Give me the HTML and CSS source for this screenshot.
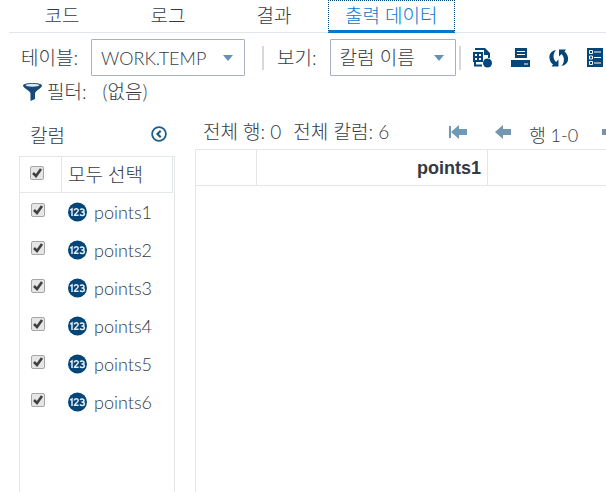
FILE: index.html
```html
<!DOCTYPE html>
<html lang="ko">

<head>
    <meta charset="utf-8">
    <meta name="viewport" content="width=device-width, initial-scale=1.0">
    <title>출력 데이터</title>
    <link rel="stylesheet" href="styles.css">
</head>

<body>
    <svg width="0" height="0" class="symbols" aria-hidden="true">
        <symbol id="numeric" viewBox="0 0 20 20">
            <circle cx="9.5" cy="10" r="9.5" fill="#04467a" />
            <g fill="none" stroke="#e6eef5" stroke-width="1.5">
                <path d="M2.2 8.2L4 7v7" />
                <path d="M6.4 8.5C6.4 6.2 10.3 6.2 10.2 8.6 10.2 10.2 6.8 11.7 6.5 13.300H10.6" />
                <path d="M12.2 7.9C13 6.4 16 6.6 16 8.5 16 9.8 15 10.1 13.5 10.1 15.2 10.1 16.4 10.6 16.4 11.9 16.3 14 13 14 12 12.5" />
            </g>
        </symbol>
    </svg>

    <nav class="tabs">
        <button class="tab">코드</button>
        <button class="tab">로그</button>
        <button class="tab">결과</button>
        <button class="tab active">출력 데이터</button>
    </nav>

    <div class="toolbar">
        <label for="table">테이블:</label>
        <select id="table" class="select-table">
            <option>WORK.TEMP</option>
        </select>
        <span class="separator"></span>
        <label for="view">보기:</label>
        <select id="view" class="select-view">
            <option>칼럼 이름</option>
        </select>
        <span class="separator tight"></span>
        <div class="tools">
            <button class="icon-button" aria-label="내보내기">
                <svg width="20" height="20" viewBox="0 0 20 20">
                    <path d="M2 0h10l5 5v5h-2V7h-4V2H2zM1 14h2v2.500h6v2H1z" fill="#04467a" />
                    <path d="M0 4h10v10H0z" fill="#04467a" />
                    <path d="M2 6h2v2H2zM6 6h2v2H6zM2 10h2v2H2zM6 10h2v2H6z" fill="#fff" />
                    <circle cx="14.500" cy="15" r="4.500" fill="#04467a" />
                </svg>
            </button>
            <button class="icon-button" aria-label="인쇄">
                <svg width="20" height="20" viewBox="0 0 20 20">
                    <path d="M4 0h12v10H4zM0 12h19v7H0z" fill="#04467a" />
                    <path d="M6 3.500h8M6 6.500h8M13 16h4" stroke="#fff" stroke-width="1.200" />
                </svg>
            </button>
            <button class="icon-button" aria-label="새로 고침">
                <svg width="20" height="20" viewBox="0 0 20 20">
                    <path d="M7 2C1.500 3 0 7 .5 10.500c.4 2.500 1.500 4.500 3.500 6L2.500 18.500H9.500v-7l-2.500 2.500C4 11 3.500 6 7 2z" fill="#04467a" />
                    <path d="M12.500 18c5.500-1 7-5 6.500-8.500-.4-2.500-1.500-4.500-3.500-6L17 1.500H10v7L12.500 6C15.500 9 16 14 12.500 18z" fill="#04467a" />
                </svg>
            </button>
            <button class="icon-button" aria-label="속성">
                <svg width="20" height="20" viewBox="0 0 20 20">
                    <path d="M0 0h16v19H0z" fill="#04467a" />
                    <path d="M7 4h7M7 9.500h7M7 15h7" stroke="#fff" stroke-width="1.200" />
                    <path d="M2.500 2.500h3v3h-3zM2.500 8h3v3h-3zM2.500 13.500h3v3h-3z" fill="none" stroke="#fff" />
                </svg>
            </button>
        </div>
    </div>

    <div class="filter">
        <svg width="20" height="20" viewBox="0 0 20 20">
            <path d="M0 3.500C0 0 19 0 19 3.500 19 6 12 9 12 11.500V17L7.500 19V11.500C7.500 9 0 6 0 3.500z" fill="#17497a" />
            <ellipse cx="9.5" cy="3.200" rx="7" ry="1.500" fill="#dfe8ef" />
        </svg>
        <span>필터:</span>
        <span class="filter-value">(없음)</span>
    </div>

    <main class="content">
        <section class="columns">
            <header class="columns-header">
                <span>칼럼</span>
                <button class="icon-button" aria-label="접기">
                    <svg width="16" height="16" viewBox="0 0 16 16" fill="none" stroke="#1c5f8d">
                        <circle cx="8" cy="8" r="6.900" stroke-width="1.800" />
                        <path d="M9.700 4.800L6.500 8l3.200 3.200" stroke-width="2.200" />
                    </svg>
                </button>
            </header>
            <div class="columns-body">
                <table class="column-list">
                    <thead>
                        <tr>
                            <th class="check"><input type="checkbox" id="all" checked></th>
                            <th><label for="all">모두 선택</label></th>
                        </tr>
                    </thead>
                    <tbody>
                        <tr>
                            <td class="check"><input type="checkbox" id="c1" checked></td>
                            <td><label for="c1"><svg width="20" height="20"><use href="#numeric" /></svg>points1</label></td>
                        </tr>
                        <tr>
                            <td class="check"><input type="checkbox" id="c2" checked></td>
                            <td><label for="c2"><svg width="20" height="20"><use href="#numeric" /></svg>points2</label></td>
                        </tr>
                        <tr>
                            <td class="check"><input type="checkbox" id="c3" checked></td>
                            <td><label for="c3"><svg width="20" height="20"><use href="#numeric" /></svg>points3</label></td>
                        </tr>
                        <tr>
                            <td class="check"><input type="checkbox" id="c4" checked></td>
                            <td><label for="c4"><svg width="20" height="20"><use href="#numeric" /></svg>points4</label></td>
                        </tr>
                        <tr>
                            <td class="check"><input type="checkbox" id="c5" checked></td>
                            <td><label for="c5"><svg width="20" height="20"><use href="#numeric" /></svg>points5</label></td>
                        </tr>
                        <tr>
                            <td class="check"><input type="checkbox" id="c6" checked></td>
                            <td><label for="c6"><svg width="20" height="20"><use href="#numeric" /></svg>points6</label></td>
                        </tr>
                    </tbody>
                </table>
            </div>
        </section>

        <section class="data">
            <div class="data-header">
                <span class="total">전체 행: 0</span>
                <span class="total">전체 칼럼: 6</span>
                <div class="pager">
                    <button class="icon-button" aria-label="처음">
                        <svg width="18" height="16" viewBox="0 0 18 16" fill="#6f9ab6">
                            <path d="M0 2h2v12H0zM2 8l8-7v4h8v6h-8v4z" />
                        </svg>
                    </button>
                    <button class="icon-button" aria-label="이전">
                        <svg width="16" height="16" viewBox="0 0 16 16" fill="#7396b1">
                            <path d="M0 8l8-7v4h8v6H8v4z" />
                        </svg>
                    </button>
                    <span class="range">행 1-0</span>
                    <button class="icon-button" aria-label="다음">
                        <svg width="16" height="16" viewBox="0 0 16 16" fill="#7396b1">
                            <path d="M16 8L8 1v4H0v6h8v4z" />
                        </svg>
                    </button>
                </div>
            </div>
            <div class="data-body">
                <table class="grid">
                    <thead>
                        <tr>
                            <th class="row-number"></th>
                            <th class="variable">points1</th>
                            <th></th>
                        </tr>
                    </thead>
                </table>
            </div>
        </section>
    </main>
</body>

</html>
```

FILE: styles.css
```css
* {
    box-sizing: border-box;
}

body {
    margin: 0;
    height: 100vh;
    display: flex;
    flex-direction: column;
    overflow: hidden;
    background: #fff;
    color: #333a45;
    font-family: Lato, "Noto Sans CJK KR", sans-serif;
    font-size: 19px;
    font-weight: 300;
    line-height: 24px;
    white-space: nowrap;
}

button,
select {
    font: inherit;
    color: inherit;
    background: none;
    border: 0;
    border-radius: 0;
    padding: 0;
}

svg {
    display: block;
    flex: none;
}

.symbols {
    position: absolute;
}

/* tabs */
.tabs {
    display: flex;
    flex: none;
    height: 33px;
    margin-left: 9px;
    border-bottom: 1px solid #e0e6ec;
}

.tab {
    min-width: 106px;
    height: 32px;
    padding: 0 16px 1px;
}

.tab.active {
    height: 33px;
    margin-left: 1px;
    color: #0378cd;
    border: 1px dotted #04467a;
    border-bottom: 3px solid #0378cd;
    padding-bottom: 0;
}

/* toolbar */
.toolbar {
    display: flex;
    flex: none;
    align-items: center;
    height: 37px;
    margin: 6px 0 0 21px;
}

.toolbar select {
    flex: none;
    appearance: none;
    height: 37px;
    padding: 0 32px 0 9px;
    border: 1px solid #a9b0c0;
    border-radius: 1px;
    background: url("data:image/svg+xml,%3Csvg xmlns='http://www.w3.org/2000/svg' width='10' height='6'%3E%3Cpath d='M0 0h10L5 6z' fill='%236590bd'/%3E%3C/svg%3E") no-repeat right 11px center;
}

.toolbar label {
    flex: none;
}

.toolbar .select-table {
    width: 154px;
    margin-left: 13px;
    font-size: 18px;
}

.toolbar .select-view {
    width: 126px;
    margin-left: 13px;
}

.separator {
    flex: none;
    width: 2px;
    height: 24px;
    margin: 0 13px 0 17px;
    background: #d5d8dc;
}

.separator.tight {
    margin: 0 12px 0 3px;
}

.tools {
    display: flex;
    gap: 18px;
}

/* filter */
.filter {
    display: flex;
    flex: none;
    align-items: center;
    gap: 4px;
    height: 32px;
    margin-left: 23px;
}

.filter-value {
    margin-left: 12px;
}

/* content */
.content {
    display: flex;
    flex: 1;
    gap: 20px;
    min-height: 0;
    margin: 8px 0 0 19px;
}

.columns {
    display: flex;
    flex: none;
    flex-direction: column;
    width: 156px;
}

.columns-header {
    display: flex;
    flex: none;
    align-items: center;
    justify-content: space-between;
    height: 40px;
    padding: 0 8px 0 11px;
}

.columns-header .icon-button {
    padding-bottom: 4px;
}

.columns-body {
    flex: 1;
    border: 1px solid #e3e7ea;
    border-bottom: 0;
}

table {
    border-collapse: separate;
    border-spacing: 0;
    table-layout: fixed;
}

th,
td {
    padding: 0;
    font-weight: inherit;
    text-align: left;
}

.column-list {
    width: 153px;
}

.column-list th {
    height: 36px;
    padding-left: 6px;
    border-right: 1px solid #e3e7ea;
    border-bottom: 1px solid #e3e7ea;
}

.column-list td {
    height: 38px;
    padding-left: 6px;
    font-size: 18px;
}

.column-list .check {
    width: 42px;
    padding: 0 0 4px 10px;
}

.column-list td.check {
    padding-left: 11px;
}

.column-list label {
    display: flex;
    align-items: center;
    gap: 6px;
}

input[type="checkbox"] {
    appearance: none;
    display: block;
    width: 14px;
    height: 14px;
    margin: 0;
    border: 1px solid #a6a6a6;
    border-radius: 2px;
    background: #e6e6e6;
}

input[type="checkbox"]:checked {
    background: #e6e6e6 url("data:image/svg+xml,%3Csvg xmlns='http://www.w3.org/2000/svg' width='12' height='12'%3E%3Cpath d='M2 6l3 3 5-7' fill='none' stroke='%23404040' stroke-width='2.6'/%3E%3C/svg%3E") no-repeat center;
}

.data {
    display: flex;
    flex: 1;
    flex-direction: column;
    min-width: 0;
}

.data-header {
    display: flex;
    flex: none;
    align-items: center;
    gap: 12px;
    height: 33px;
    padding: 0 0 2px 8px;
}

.total,
.pager {
    flex: none;
}

.pager {
    display: flex;
    align-items: center;
    margin-left: 48px;
}

.pager .icon-button + .icon-button {
    margin-left: 28px;
}

.range {
    margin: 6px 24px 0 18px;
    font-size: 18px;
}

.data-body {
    flex: 1;
    border-left: 1px solid #e6e6e6;
}

.grid {
    width: 100%;
}

.grid th {
    height: 37px;
    border: 1px solid #e6e6e6;
    border-width: 1px 1px 1px 0;
}

.grid th:last-child {
    border-right: 0;
}

.grid .row-number {
    width: 61px;
}

.grid .variable {
    width: 231px;
    padding-right: 6px;
    font-family: "Liberation Sans", Arial, sans-serif;
    font-size: 18px;
    font-weight: bold;
    text-align: right;
}
```
